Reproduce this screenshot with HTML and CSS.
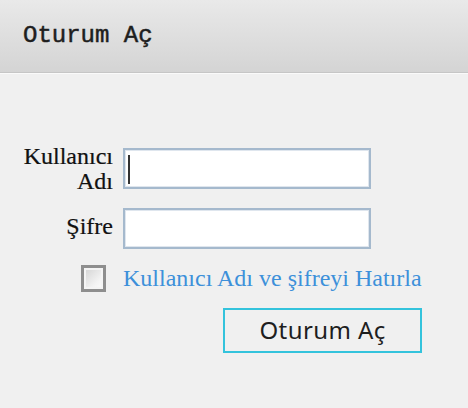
FILE: index.html
```html
<!DOCTYPE html>
<html lang="tr">
<head>
<meta charset="utf-8">
<title>Oturum Aç</title>
<link rel="stylesheet" href="styles.css">
</head>
<body>
<div class="header"><h1 class="title">Oturum Aç</h1></div>
<form class="login">
  <label class="label label-user" for="user">Kullanıcı Adı</label>
  <div class="field"><input class="input" id="user" type="text"><span class="caret"></span></div>
  <label class="label label-pass" for="pass">Şifre</label>
  <div class="field"><input class="input" id="pass" type="password"></div>
  <div class="check-cell"><input class="check" id="remember" type="checkbox"></div>
  <label class="remember" for="remember">Kullanıcı Adı ve şifreyi Hatırla</label>
  <div class="button-cell"><button class="submit" type="button">Oturum Aç</button></div>
</form>
</body>
</html>
```
FILE: styles.css
```css
html, body {
  margin: 0;
  padding: 0;
  background: #f0f0f0;
  height: 100%;
}
.header {
  height: 72px;
  background: linear-gradient(#e9e9e9, #d4d4d4);
  border-bottom: 1px solid #c6c6c6;
  box-shadow: 0 1px 0 #fafafa;
  display: flex;
  align-items: center;
  padding-left: 23px;
}
.title {
  margin: 0;
  font-family: "Courier New", "Liberation Mono", "Nimbus Mono PS", "FreeMono", monospace;
  font-weight: normal;
  font-size: 24px;
  color: #1e1e1e;
  -webkit-text-stroke: 0.5px #1e1e1e;
  transform: translateY(-1px);
}
.login {
  display: grid;
  grid-template-columns: 105px 248px;
  grid-template-rows: 41px 41px 27px 45px;
  column-gap: 10px;
  padding-left: 8px;
  padding-top: 75px;
  font-family: "Times New Roman", "Liberation Serif", "Tinos", "Nimbus Roman", "DejaVu Serif", serif;
  font-size: 24px;
}
.label {
  text-align: right;
  color: #111111;
  line-height: 25px;
  -webkit-text-stroke: 0.2px #111111;
}
.label-user {
  margin-top: -4px;
}
.label-pass {
  margin-top: 19px;
  padding-top: 6px;
}
.field {
  position: relative;
  height: 41px;
}
.field + .label + .field {
  margin-top: 19px;
}
.input {
  box-sizing: border-box;
  width: 248px;
  height: 41px;
  margin: 0;
  border: 2px solid #a5b9cd;
  outline: 1px solid #dfe6ee;
  outline-offset: -3px;
  background: #ffffff;
  padding: 0 6px;
  font-size: 20px;
}
.caret {
  position: absolute;
  left: 5px;
  top: 7px;
  width: 2px;
  height: 29px;
  background: #333;
}
.check-cell {
  display: flex;
  justify-content: flex-end;
  padding-right: 7px;
  margin-top: 35px;
}
.check {
  appearance: none;
  -webkit-appearance: none;
  box-sizing: border-box;
  margin: 0;
  width: 25px;
  height: 27px;
  border: 3px solid #8e8e8e;
  background: linear-gradient(135deg, #d2d2d2, #f4f4f4 70%, #fbfbfb);
  box-shadow: inset 0 0 0 2px #f4f4f4;
}
.remember {
  margin-top: 35px;
  white-space: nowrap;
  color: #3d90da;
  line-height: 27px;
}
.button-cell {
  grid-column: 2;
  margin-top: 51px;
}
.submit {
  box-sizing: border-box;
  margin-left: 100px;
  width: 199px;
  height: 45px;
  border: 2px solid #33c3dc;
  background: #f0f0f0;
  font-family: "Noto Sans", "DejaVu Sans", sans-serif;
  font-size: 24px;
  letter-spacing: 0.4px;
  color: #1e1e1e;
  padding: 0 0 3px 0;
}
```
